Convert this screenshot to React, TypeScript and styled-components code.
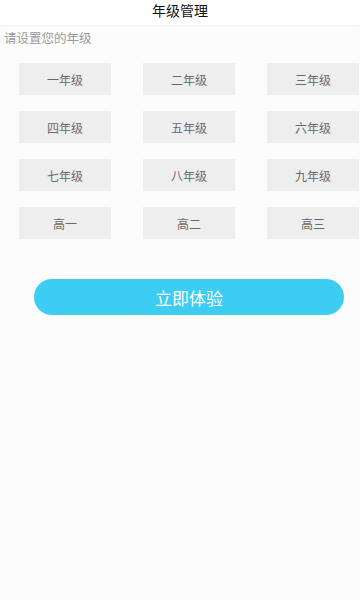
import React from "react";
import styled, { createGlobalStyle } from "styled-components";

const Global = createGlobalStyle`
  html, body { margin: 0; padding: 0; background: #fcfcfc; }
  body { font-family: "Noto Sans CJK SC", "Noto Sans", sans-serif; }
`;

const Page = styled.div`
  width: 360px;
  min-height: 600px;
  background: #fcfcfc;
`;

const Header = styled.div`
  height: 25px;
  box-sizing: border-box;
  padding-bottom: 5px;
  display: flex;
  align-items: center;
  justify-content: center;
  background: #fff;
  box-shadow: 0 1px 2px rgba(0, 0, 0, 0.05);
  font-size: 14px;
  color: #111;
  line-height: 1;
`;

const Hint = styled.div`
  padding: 4px 0 0 4px;
  height: 18px;
  font-size: 12.5px;
  line-height: 18px;
  color: #9a9a9a;
`;

const Grid = styled.div`
  display: grid;
  grid-template-columns: repeat(3, 92px);
  column-gap: 32px;
  row-gap: 16px;
  padding: 16px 0 0 19px;
`;

const Grade = styled.button`
  height: 32px;
  border: none;
  background: #eeeeee;
  color: #6a6a6a;
  font-family: inherit;
  font-size: 12px;
  padding: 0;
  display: flex;
  align-items: center;
  justify-content: center;
`;

const Submit = styled.button`
  display: flex;
  align-items: center;
  justify-content: center;
  width: 310px;
  height: 36px;
  margin: 40px 0 0 34px;
  border: none;
  border-radius: 18px;
  background: #3dcdf3;
  color: #fff;
  font-family: inherit;
  font-size: 17px;
  padding: 0;
`;

const grades = [
  "一年级", "二年级", "三年级",
  "四年级", "五年级", "六年级",
  "七年级", "八年级", "九年级",
  "高一", "高二", "高三",
];

export default function App() {
  return (
    <Page>
      <Global />
      <Header>年级管理</Header>
      <Hint>请设置您的年级</Hint>
      <Grid>
        {grades.map((g) => (
          <Grade key={g}>{g}</Grade>
        ))}
      </Grid>
      <Submit>立即体验</Submit>
    </Page>
  );
}
